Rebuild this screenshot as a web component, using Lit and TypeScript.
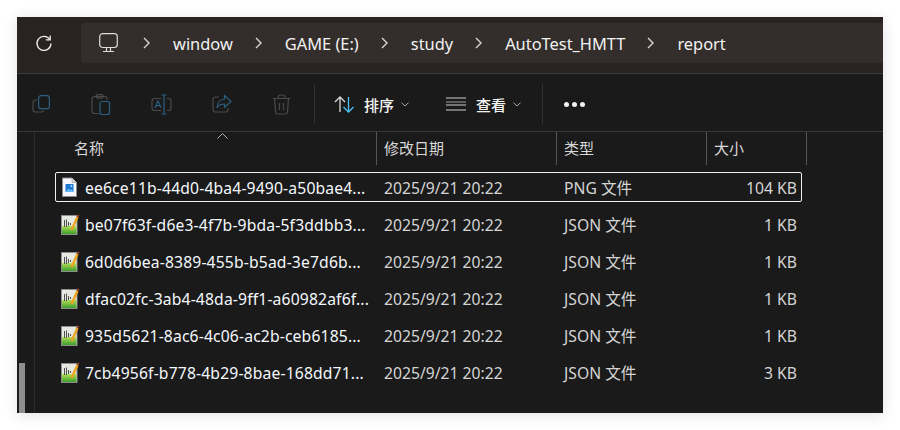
import { LitElement, html, css, svg } from "lit";
import { customElement } from "lit/decorators.js";

const crumbs = ["window", "GAME (E:)", "study", "AutoTest_HMTT", "report"];

const files = [
  { name: "ee6ce11b-44d0-4ba4-9490-a50bae4...", type: "PNG 文件", size: "104 KB", png: true },
  { name: "be07f63f-d6e3-4f7b-9bda-5f3ddbb3...", type: "JSON 文件", size: "1 KB" },
  { name: "6d0d6bea-8389-455b-b5ad-3e7d6b...", type: "JSON 文件", size: "1 KB" },
  { name: "dfac02fc-3ab4-48da-9ff1-a60982af6f...", type: "JSON 文件", size: "1 KB" },
  { name: "935d5621-8ac6-4c06-ac2b-ceb6185...", type: "JSON 文件", size: "1 KB" },
  { name: "7cb4956f-b778-4b29-8bae-168dd71...", type: "JSON 文件", size: "3 KB" },
];

const chevron = svg`<svg class="chev" width="7" height="12" viewBox="0 0 7 12" fill="none" stroke="#d8d6d4" stroke-width="1.4"><path d="M1 1l5 5-5 5"/></svg>`;
const smallChev = svg`<svg class="small-chev" width="8" height="5" viewBox="0 0 8 5" fill="none" stroke="#a8a8a8" stroke-width="1"><path d="M.5.7L4 4 7.5.7"/></svg>`;

const pngIcon = svg`<svg width="17" height="20" viewBox="0 0 17 20">
  <path d="M1.500 1h9.500l4.500 4.500V19.500H1.500z" fill="#f6f8fb" stroke="#8b8b8b"/>
  <path d="M11 1v4.500h4.500" fill="#d6d8dc" stroke="#a5a5a5" stroke-width=".7"/>
  <rect x="4.500" y="7" width="8" height="8" rx=".5" fill="#1d78d2"/>
  <path d="M4.500 15l3-3.500 1.500 1.500 1.500-1 2 3z" fill="#63b9f2"/>
  <circle cx="10.300" cy="9" r="1" fill="#a9dcfa"/>
</svg>`;

const jsonIcon = svg`<svg width="19" height="21" viewBox="0 0 19 21">
  <defs><linearGradient id="lime" x1="0" y1="0" x2="0" y2="1">
    <stop offset="0" stop-color="#b4df5c"/><stop offset="1" stop-color="#3c9e2a"/>
  </linearGradient></defs>
  <rect x=".5" y="1.500" width="15.500" height="19" fill="#e6e9e2" stroke="#8f8f8f"/>
  <rect x="1" y="12" width="14.500" height="8" fill="url(#lime)"/>
  <path d="M3.500 6v7M5.500 5.500v7.500M7.500 8v4M9.500 9v2" stroke="#4d4d4d" stroke-width="1"/>
  <path d="M10.500 16L16.500 3" stroke="#eda41e" stroke-width="2.400"/>
  <path d="M16.500 3l1.100-2.200" stroke="#8a3b2c" stroke-width="2"/>
</svg>`;

@customElement("app-root")
export class AppRoot extends LitElement {
  static styles = css`
    :host {
      display: block;
      width: 900px;
      height: 430px;
      padding: 17px;
      box-sizing: border-box;
      background: #fff;
      font-family: "Noto Sans", "Noto Sans CJK SC", sans-serif;
    }
    .window {
      position: relative;
      height: 396px;
      background: #1a1a1a;
      overflow: hidden;
      box-shadow: 0 2px 14px rgba(0, 0, 0, 0.12);
    }
    .top {
      box-sizing: border-box;
      padding-top: 6px;
      display: flex;
      background: #282220;
      border-bottom: 1px solid #3f3d3b;
      height: 57px;
    }
    .refresh {
      width: 54px;
      height: 40px;
      padding-right: 10px;
      display: flex;
      align-items: center;
      justify-content: center;
      flex: none;
    }
    .path {
      flex: 1;
      height: 40px;
      background: #332e2b;
      border-radius: 4px 0 0 4px;
      display: flex;
      align-items: center;
      gap: 23px;
      padding-left: 18px;
      font-size: 16.4px;
      color: #f2f2f2;
      white-space: nowrap;
    }
    .path .pc {
      margin-right: 3px;
    }
    .path .chev {
      margin-left: -1px;
    }
    .toolbar {
      box-sizing: border-box;
      display: flex;
      align-items: center;
      padding: 3px 0 0 15px;
      border-bottom: 1px solid #383838;
      font-size: 15px;
      color: #f4f4f4;
      height: 58px;
    }
    .tools {
      display: flex;
      gap: 40px;
      align-items: center;
    }
    .tools svg {
      display: block;
    }
    .sep {
      width: 1px;
      height: 40px;
      background: #303030;
      margin-left: 23px;
    }
    .action {
      display: flex;
      align-items: center;
      margin-left: 19px;
    }
    .action span {
      margin: 0 7px 0 10px;
      font-weight: 500;
    }
    .action + .action {
      margin-left: 37px;
    }
    .dots {
      display: flex;
      gap: 3px;
      margin-left: 21px;
    }
    .dots i {
      width: 5px;
      height: 5px;
      border-radius: 50%;
      background: #f2f2f2;
    }
    .sep.after {
      margin-left: 21px;
    }
    .list {
      margin-left: 17px;
      border-left: 1px solid #2c2c2c;
      height: 281px;
    }
    .head {
      position: relative;
      display: grid;
      grid-template-columns: 342px 180px 150px 100px;
      height: 32px;
      font-size: 15px;
      color: #d8d8d8;
    }
    .head div {
      border-right: 1px solid #565656;
      padding-left: 7px;
      line-height: 33px;
    }
    .head div:first-child {
      padding-left: 39px;
    }
    .caret {
      position: absolute;
      left: 182px;
      top: 1px;
    }
    .rows {
      display: flex;
      flex-direction: column;
      gap: 7px;
      padding: 8px 0 0 20px;
    }
    .row {
      width: 747px;
      height: 30px;
      box-sizing: border-box;
      border: 1px solid transparent;
      border-radius: 2px;
      display: grid;
      grid-template-columns: 5px 24px 299px 180px 1fr auto;
      align-items: center;
      font-size: 15.7px;
      color: #d4d4d4;
      white-space: nowrap;
      padding-right: 4px;
    }
    .row span {
      padding-top: 1px;
    }
    .row.sel {
      border-color: #f0f0f0;
    }
    .row svg {
      grid-column: 2;
      display: block;
    }
    .row .name {
      color: #f4f8fc;
      letter-spacing: 0.15px;
    }
    .scroll {
      position: absolute;
      left: 2px;
      bottom: 0;
      width: 6px;
      height: 50px;
      background: #8e8e8e;
    }
  `;

  render() {
    return html`
      <div class="window">
        <div class="top">
          <div class="refresh">
            <svg width="18" height="18" viewBox="0 0 18 18" fill="none" stroke="#f0f0f0" stroke-width="1.300">
              <path d="M14.800 5.500A7 7 0 1 0 16 9.500"/>
              <path d="M15.200 1.500v4.300h-4.300"/>
            </svg>
          </div>
          <div class="path">
            <svg class="pc" width="19" height="20" viewBox="0 0 19 20" fill="none" stroke="#dcdcdc" stroke-width="1.200">
              <rect x=".7" y=".7" width="17.600" height="13.800" rx="3"/>
              <path d="M7.500 14.500v3.500M11.500 14.500v3.500M4 18.500h11"/>
            </svg>
            ${chevron}
            ${crumbs.map(
              (c, i) => html`<span>${c}</span>${i < crumbs.length - 1 ? chevron : ""}`
            )}
          </div>
        </div>
        <div class="toolbar">
          <div class="tools">
            <svg width="19" height="18" viewBox="0 0 19 18" fill="none" stroke-width="1.200">
              <path d="M5 5H3.500A2.500 2.500 0 0 0 1 7.500v7A2.500 2.500 0 0 0 3.500 17h6a2.500 2.500 0 0 0 2.500-2" stroke="#4a4a4a"/>
              <rect x="6.600" y=".7" width="10.800" height="13" rx="2.500" stroke="#2d5f80"/>
            </svg>
            <svg width="20" height="21" viewBox="0 0 20 21" fill="none" stroke-width="1.200">
              <path d="M8 19.500H3.500A2.500 2.500 0 0 1 1 17V5a2.500 2.500 0 0 1 2.500-2.500h10A2.500 2.500 0 0 1 16 5v1" stroke="#4a4a4a"/>
              <rect x="5" y=".7" width="7" height="3.500" rx="1.500" stroke="#4a4a4a"/>
              <rect x="9" y="7.500" width="9.500" height="13" rx="2" stroke="#2d5f80"/>
            </svg>
            <svg width="21" height="21" viewBox="0 0 21 21" fill="none" stroke-width="1.200">
              <path d="M10 4.500H3.500A2.500 2.500 0 0 0 1 7v7a2.500 2.500 0 0 0 2.500 2.500H10M16 4.500h1.500A2.500 2.500 0 0 1 20 7v7a2.500 2.500 0 0 1-2.500 2.500H16" stroke="#4a4a4a"/>
              <path d="M10.500 1h5M13 1v19M10.500 20h5M4 14l2.800-7h.4L10 14M5 11.700h4" stroke="#2d5f80"/>
            </svg>
            <svg width="20" height="20" viewBox="0 0 20 20" fill="none" stroke-width="1.200">
              <path d="M7 3H3.500A2.500 2.500 0 0 0 1 5.500v10A2.500 2.500 0 0 0 3.500 18h10a2.500 2.500 0 0 0 2.500-2.500V14" stroke="#4a4a4a"/>
              <path d="M12.500 1.500L19 7.500l-6.500 6V10C9 10 6.500 11 5 14c0-5 3-8.500 7.500-9z" stroke="#2d5f80"/>
            </svg>
            <svg width="19" height="21" viewBox="0 0 19 21" fill="none" stroke="#4a4a4a" stroke-width="1.200">
              <path d="M.5 4.500h18M6 4.500V3a2 2 0 0 1 2-2h3a2 2 0 0 1 2 2v1.500M2.500 4.500l1 13.500a2.300 2.300 0 0 0 2.300 2h7.400a2.300 2.300 0 0 0 2.300-2l1-13.500M7.500 9v7M11.500 9v7"/>
            </svg>
          </div>
          <div class="sep"></div>
          <div class="action">
            <svg width="20" height="18" viewBox="0 0 20 18" fill="none" stroke-width="1.300">
              <path d="M1 7l5-5 5 5M6 2v15" stroke="#d8d8d8"/>
              <path d="M9.500 12l5 5 5-5M14.500 2v15" stroke="#4cc2ff"/>
            </svg>
            <span>排序</span>${smallChev}
          </div>
          <div class="action">
            <svg width="20" height="14" viewBox="0 0 20 14" fill="none" stroke-width="1.200">
              <path d="M0 1h20M0 8h20M0 13h20" stroke="#cfcfcf"/>
              <path d="M0 5h20" stroke="#8a8a8a"/>
            </svg>
            <span>查看</span>${smallChev}
          </div>
          <div class="sep after"></div>
          <div class="dots"><i></i><i></i><i></i></div>
        </div>
        <div class="list">
          <div class="head">
            <div>名称</div>
            <div>修改日期</div>
            <div>类型</div>
            <div>大小</div>
            <svg class="caret" width="11" height="6" viewBox="0 0 11 6" fill="none" stroke="#b0b0b0" stroke-width="1">
              <path d="M.5 5.500l5-5 5 5"/>
            </svg>
          </div>
          <div class="rows">
            ${files.map(
              (f, i) => html`
                <div class="row ${i === 0 ? "sel" : ""}">
                  ${f.png ? pngIcon : jsonIcon}
                  <span class="name">${f.name}</span>
                  <span>2025/9/21 20:22</span>
                  <span>${f.type}</span>
                  <span>${f.size}</span>
                </div>
              `
            )}
          </div>
        </div>
        <div class="scroll"></div>
      </div>
    `;
  }
}
